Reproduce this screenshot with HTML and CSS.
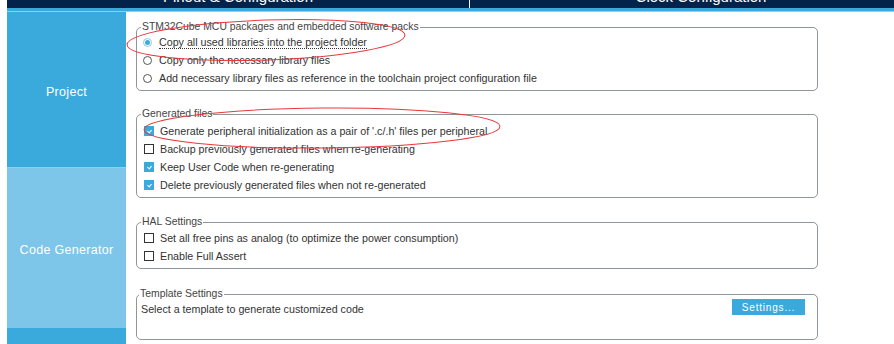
FILE: index.html
```html
<!DOCTYPE html>
<html lang="en">
<head>
    <meta charset="UTF-8">
    <title>Project Manager - Code Generator</title>
    <link rel="stylesheet" href="styles.css">
</head>
<body>
    <div class="tabs">
        <div class="tab">Pinout &amp; Configuration</div>
        <div class="tab">Clock Configuration</div>
    </div>
    <div class="strip"></div>

    <div class="main">
        <nav class="side">
            <div class="side-item first">Project</div>
            <div class="side-item selected">Code Generator</div>
            <div class="side-item"></div>
        </nav>

        <div class="content">
            <fieldset class="group g1">
                <legend>STM32Cube MCU packages and embedded software packs</legend>
                <div class="row"><span class="radio on"></span><span class="focus">Copy all used libraries into the project folder</span></div>
                <div class="row"><span class="radio"></span>Copy only the necessary library files</div>
                <div class="row"><span class="radio"></span>Add necessary library files as reference in the toolchain project configuration file</div>
            </fieldset>

            <fieldset class="group g2">
                <legend>Generated files</legend>
                <div class="row"><span class="check on"></span>Generate peripheral initialization as a pair of '.c/.h' files per peripheral</div>
                <div class="row"><span class="check"></span>Backup previously generated files when re-generating</div>
                <div class="row"><span class="check on"></span>Keep User Code when re-generating</div>
                <div class="row"><span class="check on"></span>Delete previously generated files when not re-generated</div>
            </fieldset>

            <fieldset class="group g3">
                <legend>HAL Settings</legend>
                <div class="row"><span class="check"></span>Set all free pins as analog (to optimize the power consumption)</div>
                <div class="row"><span class="check"></span>Enable Full Assert</div>
            </fieldset>

            <fieldset class="group g4">
                <legend>Template Settings</legend>
                <div class="tpl">
                    <span class="tpl-text">Select a template to generate customized code</span>
                    <button type="button">Settings...</button>
                </div>
            </fieldset>
        </div>

        <!-- red marks drawn over the screenshot -->
        <svg class="marks" width="894" height="344" viewBox="0 0 894 344">
            <ellipse cx="266" cy="40" rx="139" ry="20" transform="rotate(-2 266 40)" />
            <ellipse cx="322" cy="128" rx="178" ry="20" transform="rotate(-0.5 322 128)" />
        </svg>
    </div>
</body>
</html>
```

FILE: styles.css
```css
html, body {
    margin: 0;
    height: 100%;
}
body {
    padding-left: 7px;
    font-family: "Liberation Sans", Arial, sans-serif;
    font-size: 10.7px;
    color: #333;
    background: #fff;
    overflow: hidden;
    position: relative;
}
.tabs {
    display: flex;
    height: 8px;
    overflow: hidden;
    background: #03234b;
}
.tab {
    flex: 0 0 462px;
    text-align: center;
    color: #fff;
    font-size: 15px;
    line-height: 16px;
    margin-top: -11px;
    border-right: 1px solid #fff;
}
.strip {
    height: 3px;
    background: #3aaadc;
    border-bottom: 1px solid #8fd0f0;
}
.main {
    display: flex;
    height: 332px;
}
.side {
    width: 119px;
    display: flex;
    flex-direction: column;
    background: #3aaadc;
}
.side-item {
    display: flex;
    align-items: center;
    justify-content: center;
    box-sizing: border-box;
    color: #fff;
    font-size: 12.5px;
    letter-spacing: 0.3px;
    background: #3aaadc;
}
.side-item.first {
    height: 155px;
    padding-top: 4px;
}
.side-item.selected {
    height: 161px;
    padding-top: 4px;
    border-top: 1px solid #8fd0f0;
    background: #7dc5e9;
}
.side-item:last-child {
    flex: 1;
}
.content {
    margin-left: 10px;
    width: 682px;
    padding-top: 9px;
}
.group {
    margin: 0 0 17px;
    padding: 0 4px 3px 6px;
    border: 1px solid #8f959b;
    border-radius: 5px;
}
.group legend {
    margin-left: -2px;
    padding: 0 1px;
    line-height: 12px;
    font-size: 10.4px;
    color: #444;
}
.g2 {
    padding-top: 2px;
}
.g3 {
    margin-top: 18px;
    margin-bottom: 19px;
    padding-top: 1px;
}
.g4 {
    padding-left: 4px;
    padding-bottom: 24px;
}
.row {
    display: flex;
    align-items: center;
    height: 18px;
}
.focus {
    border-bottom: 1px dotted #333;
    line-height: 11px;
    margin-top: 2px;
}
.radio {
    width: 7px;
    height: 7px;
    border: 1px solid #555;
    border-radius: 50%;
    margin-right: 7px;
    position: relative;
}
.radio.on {
    border-color: #8ec6e6;
}
.radio.on::after {
    content: "";
    position: absolute;
    left: 1px;
    top: 1px;
    width: 5px;
    height: 5px;
    border-radius: 50%;
    background: #3aaadc;
}
.check {
    width: 8px;
    height: 8px;
    border: 1px solid #333;
    margin: 0 6px 0 1px;
    position: relative;
}
.check.on {
    border-color: #3aaadc;
    background: #3aaadc;
}
.check.on::after {
    content: "";
    position: absolute;
    left: 3px;
    top: 2px;
    width: 2px;
    height: 3px;
    border: solid #fff;
    border-width: 0 1px 1px 0;
    transform: rotate(40deg);
}
.tpl {
    display: flex;
    justify-content: space-between;
    align-items: flex-start;
    height: 16px;
    margin-top: -1px;
}
.tpl-text {
    padding-top: 4px;
}
.tpl button {
    width: 73px;
    height: 16px;
    margin-right: 8px;
    border: none;
    padding: 0;
    background: #3aaadc;
    color: #fff;
    font-family: inherit;
    font-size: 10px;
    letter-spacing: 0.8px;
}
.marks {
    position: absolute;
    left: 0;
    top: 0;
    pointer-events: none;
}
.marks ellipse {
    fill: none;
    stroke: #e8383d;
    stroke-width: 1;
}
```
